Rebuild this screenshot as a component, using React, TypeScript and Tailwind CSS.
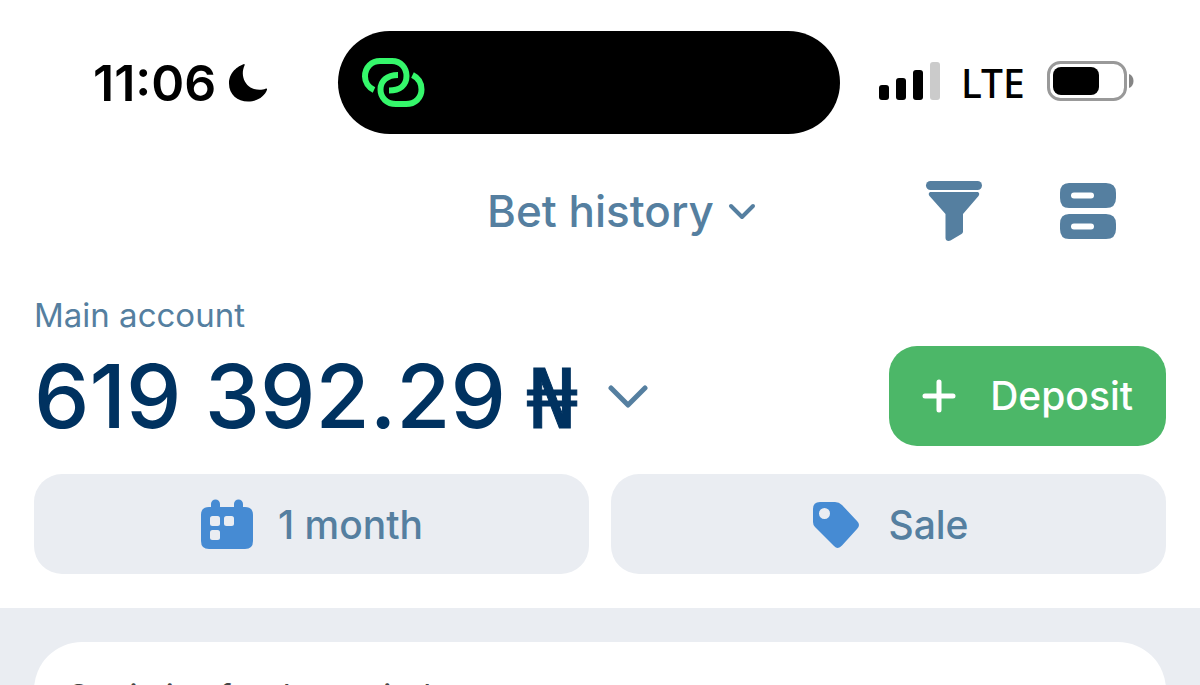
import React from "react";

function StatusBar() {
  return (
    <div className="flex items-center justify-between pt-[31px]">
      <div className="flex w-[338px] items-center gap-3 pl-[93px]">
        <span className="text-[50px] leading-[56px] font-semibold">11:06</span>
        <svg width="40" height="40" viewBox="0 0 40 40" aria-label="Do not disturb" role="img">
          <path d="M15.500 1.200C13.200 2 1 7 1 20.500C1 31.500 9.500 38.500 20 38.500C29.500 38.500 36.500 33.500 39 26.800C39.300 25.700 38.800 25.200 37.500 25.700C34 27 28 27.400 22.500 24.500C16 20.500 12.500 11.500 16.500 2.600C17 1.500 16.600 .8 15.500 1.200Z" fill="#000" />
        </svg>
      </div>
      <div className="flex h-[103px] w-[502px] items-center rounded-full bg-black pl-[23px]">
        <svg width="64" height="52" viewBox="0 0 64 52" fill="none" stroke="#35f76b" strokeWidth="6" aria-label="Linked" role="img">
          <path d="M13 33C7.500 30.500 4 25 4 19.500C4 10 11 4 19 4H31C40 4 45.500 11 45.500 19C45.500 28 39 33.500 28 33.500" />
          <path d="M37 18C26 18 19.500 24 19.500 32.500C19.500 41 26 47 35 47H45C54 47 60.500 41 60.500 32.500C60.500 26 57.500 21 51.500 18" />
        </svg>
      </div>
      <div className="flex w-[360px] items-center pb-1 pl-[39px]">
        <svg width="62" height="40" viewBox="0 0 62 40" aria-label="Signal strength" role="img">
          <rect x="0" y="24" width="10" height="15" rx="3" />
          <rect x="17" y="17" width="10" height="22" rx="3" />
          <rect x="34" y="9" width="10" height="30" rx="3" />
          <rect x="51" y="1" width="10" height="38" rx="3" fill="#cbcbcb" />
        </svg>
        <span className="pt-1 pl-5 font-['Noto_Sans',sans-serif] text-[39px] leading-[48px] font-medium">LTE</span>
        <svg className="ml-[22px]" width="88" height="40" viewBox="0 0 88 40" aria-label="Battery" role="img">
          <rect x="1.500" y="1.500" width="77" height="37" rx="12" fill="none" stroke="#999" strokeWidth="3" />
          <rect x="6" y="6" width="46" height="28" rx="8" />
          <path d="M82 13C88 15 88 25 82 27Z" fill="#858585" />
        </svg>
      </div>
    </div>
  );
}

function Chevron({ large = false }: { large?: boolean }) {
  return (
    <svg width={large ? 40 : 28} height={large ? 24 : 18} viewBox={large ? "0 0 40 24" : "0 0 28 18"} fill="none" stroke="#557fa0" strokeWidth={large ? 5 : 4} strokeLinecap="round" strokeLinejoin="round" aria-hidden="true">
      <path d={large ? "M3 4L20 21L37 4" : "M3 4L14 15L25 4"} />
    </svg>
  );
}

export default function App() {
  return (
    <div className="h-screen overflow-hidden bg-[#eaedf2] font-[Inter,sans-serif] text-black">
      <div className="bg-white pb-[34px]">
        <StatusBar />

        <header className="mt-[42px] grid grid-cols-[1fr_auto_1fr] items-center pr-[83px] pl-[34px]">
          <button className="col-start-2 ml-[92px] flex items-center gap-[14px] text-[44px] leading-[70px] font-medium text-[#557fa0]">
            Bet history
            <Chevron />
          </button>
          <div className="flex justify-end gap-[76px]">
            <button aria-label="Filter">
              <svg width="58" height="62" viewBox="0 0 58 62" fill="#557fa0">
                <rect x="1" y="1" width="56" height="9" rx="4.500" />
                <path d="M6 12H52C54 12 55 14 53.500 16L38 34V51.500Q38 53 36.500 54L25.500 60.500C23 61.500 20.500 60.500 20.500 58V34L4.500 16C3 14 4 12 6 12Z" />
              </svg>
            </button>
            <button aria-label="Change view">
              <svg width="58" height="58" viewBox="0 0 58 58" fill="#557fa0">
                <path fillRule="evenodd" d="M10 1H47Q57 1 57 11V16Q57 26 47 26H10Q1 26 1 16V11Q1 1 10 1ZM15 10.500a3 3 0 0 0 0 6H32a3 3 0 0 0 0-6Z" />
                <path fillRule="evenodd" d="M10 32H47Q57 32 57 42V47Q57 57 47 57H10Q1 57 1 47V42Q1 32 10 32ZM15 41.500a3 3 0 0 0 0 6H32a3 3 0 0 0 0-6Z" />
              </svg>
            </button>
          </div>
        </header>

        <main className="mt-[47px] px-[34px]">
          <p className="text-[33px] leading-[44px] text-[#557fa0]">Main account</p>
          <div className="mt-[9px] flex items-center justify-between">
            <button className="flex items-center gap-[30px] text-[88px] leading-[100px] font-medium text-[#003260]">
              <span className="flex items-baseline gap-5">
                619 392.29 <span className="font-['DejaVu_Sans',sans-serif] text-[82px] leading-none [-webkit-text-stroke:1px_currentColor]">₦</span>
              </span>
              <Chevron large />
            </button>
            <button className="flex h-[100px] items-center gap-[34px] rounded-[28px] bg-[#4cb768] px-[33px] text-[39px] font-medium text-white">
              <svg width="34" height="34" viewBox="0 0 34 34" stroke="currentColor" strokeWidth="5" strokeLinecap="round" aria-hidden="true">
                <path d="M17 3V31M3 17H31" />
              </svg>
              Deposit
            </button>
          </div>
          <div className="mt-7 grid grid-cols-2 gap-[22px]">
            <button className="flex h-[100px] items-center justify-center gap-6 rounded-[28px] bg-[#eaedf2] pt-[2px] text-[39px] font-medium text-[#557fa0]">
              <svg width="54" height="52" viewBox="0 0 54 52" aria-hidden="true">
                <path d="M9 8H11V5a4.500 4.500 0 0 1 9 0V8H34V5a4.500 4.500 0 0 1 9 0V8H45Q53 8 53 16V42Q53 50 45 50H9Q1 50 1 42V16Q1 8 9 8Z" fill="#468bd3" />
                <rect x="10" y="17" width="10" height="10" rx="2.500" fill="#eaedf2" />
                <rect x="24" y="17" width="10" height="10" rx="2.500" fill="#eaedf2" />
                <rect x="10" y="31" width="10" height="10" rx="2.500" fill="#eaedf2" />
              </svg>
              1 month
            </button>
            <button className="flex h-[100px] items-center justify-center gap-7 rounded-[28px] bg-[#eaedf2] pt-[2px] pl-1 text-[39px] font-medium text-[#557fa0]">
              <svg width="48" height="50" viewBox="0 0 48 50" aria-hidden="true">
                <path fillRule="evenodd" d="M8 2H23Q27 2 30 5L45 21Q49 25 45 29L30 45.500Q26 50 22 46L3 27Q1 25 1 22V9Q1 2 8 2ZM12.500 8a5.500 5.500 0 1 0 0 11a5.500 5.500 0 0 0 0-11Z" fill="#468bd3" />
              </svg>
              Sale
            </button>
          </div>
        </main>
      </div>

      <section className="px-[34px] pt-[34px]">
        <div className="rounded-t-[48px] bg-white px-[34px] pt-8">
          <h2 className="text-[33px] leading-[44px] text-[#444]">Statistics for the period</h2>
        </div>
      </section>
    </div>
  );
}
